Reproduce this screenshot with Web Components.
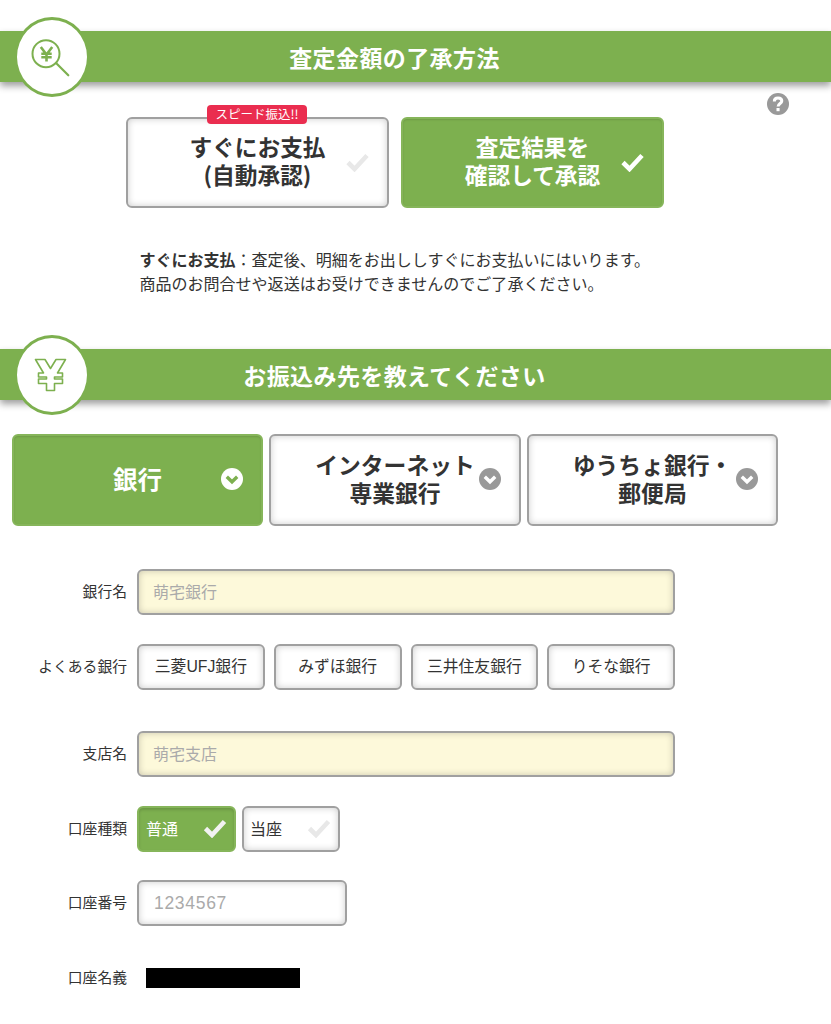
<!DOCTYPE html>
<html lang="ja">
<head>
<meta charset="utf-8">
<title>査定金額の了承方法</title>
<style>
  html, body { margin: 0; background: #fff; }
  body {
    font-family: "Noto Sans CJK JP", "Noto Sans", sans-serif;
    color: #333;
    width: 831px;
    height: 1024px;
    overflow: hidden;
  }
  main { display: block; padding-top: 17px; }
  .choices { display: flex; gap: 12px; padding-left: 126px; margin-top: 20px; position: relative; }
  .tabs { display: flex; gap: 6px; padding-left: 12px; margin-top: 19px; }
  .note { margin: 39px 0 0 139.500px; font-size: 16.030px; line-height: 24px; color: #333; white-space: nowrap; }
  .note b { font-weight: 700; }
  .form { margin-top: 43px; }
  .secret { display: block; width: 154px; height: 20px; background: #000; margin-left: 9px; }
  .help { position: absolute; left: 767px; top: -24px; }
</style>
</head>
<body>
<main>
  <section-bar title="査定金額の了承方法">
    <svg slot="icon" width="44" height="44" viewBox="0 0 44 44" fill="none" stroke="#7db04f">
      <circle cx="16" cy="18.700" r="13.500" stroke-width="2"/>
      <path d="M26 28 L38.300 40.300" stroke-width="2.200" stroke-linecap="round"/>
      <path d="M10.800 12 L16.500 19.500 L22.200 12 M16.500 19.500 V26.500 M11.300 18.800 H21.700 M11.300 22.300 H21.700" stroke-width="2.600"/>
    </svg>
  </section-bar>

  <div class="choices">
    <big-choice badge="スピード振込!!">すぐにお支払<br>(自動承認)</big-choice>
    <big-choice selected>査定結果を<br>確認して承認</big-choice>
    <svg class="help" width="22" height="22" viewBox="0 0 22 22">
      <circle cx="11" cy="11" r="11" fill="#999"/>
      <path d="M7.300 8.400 C7.300 5.900 9 4.900 11 4.900 C13.200 4.900 14.800 6.100 14.800 8 C14.800 10.500 11.100 10.500 11.100 13.500" fill="none" stroke="#fff" stroke-width="3"/>
      <rect x="9.500" y="15" width="3.100" height="3.200" fill="#fff"/>
    </svg>
  </div>

  <p class="note"><b>すぐにお支払</b>：査定後、明細をお出ししすぐにお支払いにはいります。<br>商品のお問合せや返送はお受けできませんのでご了承ください。</p>

  <section-bar title="お振込み先を教えてください" style="margin-top:40px">
    <svg slot="icon" width="33" height="34" viewBox="0 0 33 34" style="margin-left:-3px">
      <path d="M1.500 1.500 H11 L16.500 10.500 L22 1.500 H31.500 L23.500 15 H28.500 V19 H20.500 V21 H28.500 V25.500 H20.500 V32.500 H12.500 V25.500 H4.500 V21 H12.500 V19 H4.500 V15 H9.500 Z" fill="#fff" stroke="#7db04f" stroke-width="1.600" stroke-linejoin="round"/>
    </svg>
  </section-bar>

  <div class="tabs">
    <bank-tab selected>銀行</bank-tab>
    <bank-tab>インターネット<br>専業銀行</bank-tab>
    <bank-tab>ゆうちょ銀行・<br>郵便局</bank-tab>
  </div>

  <div class="form">
    <form-row label="銀行名" gap="29"><text-box value="萌宅銀行" tint width="538"></text-box></form-row>
    <form-row label="よくある銀行" gap="29">
      <pill-button>三菱UFJ銀行</pill-button>
      <pill-button>みずほ銀行</pill-button>
      <pill-button>三井住友銀行</pill-button>
      <pill-button>りそな銀行</pill-button>
    </form-row>
    <form-row label="支店名" gap="41"><text-box value="萌宅支店" tint width="538"></text-box></form-row>
    <form-row label="口座種類" gap="29">
      <radio-chip selected>普通</radio-chip>
      <radio-chip>当座</radio-chip>
    </form-row>
    <form-row label="口座番号" gap="28"><text-box value="1234567" latin width="210"></text-box></form-row>
    <form-row label="口座名義" gap="42"><span class="secret"></span></form-row>
  </div>
</main>

<template id="check">
  <svg class="check" viewBox="0 0 24 20"><path d="M2.500 10.500 L9 17 L21.500 3.500" fill="none" stroke="currentColor" stroke-width="4.600"/></svg>
</template>

<script>
  const GREEN = '#7db04f'
  const checkMarkup = document.getElementById('check').innerHTML

  class SectionBar extends HTMLElement {
    constructor() {
      super()
      this.attachShadow({ mode: 'open' }).innerHTML = `
        <style>
          :host { display: block; position: relative; height: 80px; }
          .bar {
            position: absolute; left: 0; right: 0; top: 14px; height: 51px;
            background: ${GREEN};
            box-shadow: 0 4px 7px rgba(0, 0, 0, .38);
            color: #fff; font-size: 23px; font-weight: 700; letter-spacing: .4px;
            display: flex; align-items: center; justify-content: center;
            padding-right: 42px; box-sizing: border-box;
          }
          .badge {
            position: absolute; left: 14px; top: 0; width: 76px; height: 80px;
            box-sizing: border-box; border: 3px solid ${GREEN}; border-radius: 50%;
            background: #fff; display: flex; align-items: center; justify-content: center;
          }
        </style>
        <div class="bar"><span id="t"></span></div>
        <div class="badge"><slot name="icon"></slot></div>`
    }
    connectedCallback() {
      this.shadowRoot.getElementById('t').textContent = this.getAttribute('title')
    }
  }

  class BigChoice extends HTMLElement {
    constructor() {
      super()
      this.attachShadow({ mode: 'open' }).innerHTML = `
        <style>
          :host {
            display: flex; position: relative; width: 263px; height: 91px; box-sizing: border-box;
            border: 2px solid #a0a0a0; border-radius: 6px; background: #fff;
            box-shadow: inset 0 0 7px rgba(0, 0, 0, .2);
            align-items: center; justify-content: center;
            font-size: 22.700px; line-height: 28px; font-weight: 700; color: #333; text-align: center;
          }
          :host([selected]) { background: ${GREEN}; border-color: #86b55a; color: #fff; box-shadow: inset 0 1px 2px rgba(0, 0, 0, .12); }
          .label { margin-top: -3px; }
          .check { position: absolute; right: 17px; top: 33px; width: 25px; height: 20px; color: #e8e8e8; }
          :host([selected]) .check { color: #fff; }
          .tag {
            position: absolute; left: 79px; top: -14px; height: 19px; width: 100px;
            background: #ea2d4f; color: #fff; border-radius: 4px;
            font-size: 12.500px; line-height: 18px; font-weight: 400; white-space: nowrap;
          }
        </style>
        <div class="label"><slot></slot></div>
        ${checkMarkup}
        <div class="tag" hidden></div>`
    }
    connectedCallback() {
      const tag = this.shadowRoot.querySelector('.tag')
      if (this.hasAttribute('badge')) {
        tag.textContent = this.getAttribute('badge')
        tag.hidden = false
      } else {
        tag.remove()
      }
    }
  }

  class BankTab extends HTMLElement {
    constructor() {
      super()
      this.attachShadow({ mode: 'open' }).innerHTML = `
        <style>
          :host {
            display: flex; position: relative; width: 252px; height: 92px; box-sizing: border-box;
            border: 2px solid #a0a0a0; border-radius: 6px; background: #fff;
            box-shadow: inset 0 0 7px rgba(0, 0, 0, .2);
            align-items: center; justify-content: center;
            font-size: 22.800px; line-height: 28px; font-weight: 700; color: #333; text-align: center;
          }
          :host(:last-child) { width: 251px; }
          :host([selected]) { width: 251px; font-size: 24.500px; background: ${GREEN}; border-color: #86b55a; color: #fff; box-shadow: inset 0 1px 2px rgba(0, 0, 0, .12); }
          .label { margin-top: -3px; }
          svg { position: absolute; right: 18px; top: 32px; width: 22px; height: 22px; }
          circle { fill: #999; }
          path { stroke: #fff; }
          :host([selected]) circle { fill: #fff; }
          :host([selected]) path { stroke: ${GREEN}; }
        </style>
        <div class="label"><slot></slot></div>
        <svg viewBox="0 0 22 22"><circle cx="11" cy="11" r="11"/><path d="M5.800 8.800 L11 13.800 L16.200 8.800" fill="none" stroke-width="3.400"/></svg>`
    }
  }

  class FormRow extends HTMLElement {
    constructor() {
      super()
      this.attachShadow({ mode: 'open' }).innerHTML = `
        <style>
          :host { display: flex; align-items: center; font-size: 14.800px; color: #333; }
          .label { width: 127px; text-align: right; white-space: nowrap; flex: none; margin-top: -3px; }
          .body { display: flex; gap: 9px; margin-left: 10px; }
        </style>
        <div class="label"></div>
        <div class="body"><slot></slot></div>`
    }
    connectedCallback() {
      this.shadowRoot.querySelector('.label').textContent = this.getAttribute('label')
      this.style.marginTop = this.getAttribute('gap') + 'px'
      if (this.querySelector('radio-chip')) this.shadowRoot.querySelector('.body').style.gap = '6px'
    }
  }

  class TextBox extends HTMLElement {
    constructor() {
      super()
      this.attachShadow({ mode: 'open' }).innerHTML = `
        <style>
          :host {
            display: flex; align-items: center; height: 46px; box-sizing: border-box;
            border: 2px solid #a0a0a0; border-radius: 6px; background: #fff;
            box-shadow: inset 0 0 7px rgba(0, 0, 0, .2);
            padding: 0 0 2px 14px; font-size: 16px; color: #aaa;
          }
          :host([tint]) { background: #fdf9da; }
          :host([latin]) { font-family: "Liberation Sans", sans-serif; font-size: 17.500px; letter-spacing: .7px; padding-left: 15px; padding-bottom: 0; }
        </style>
        <span></span>`
    }
    connectedCallback() {
      this.shadowRoot.querySelector('span').textContent = this.getAttribute('value')
      this.style.width = this.getAttribute('width') + 'px'
    }
  }

  class PillButton extends HTMLElement {
    constructor() {
      super()
      this.attachShadow({ mode: 'open' }).innerHTML = `
        <style>
          :host {
            display: flex; align-items: center; justify-content: center;
            width: 127.750px; height: 46px; box-sizing: border-box; padding-bottom: 3px;
            border: 2px solid #a0a0a0; border-radius: 6px; background: #fff;
            box-shadow: inset 0 0 7px rgba(0, 0, 0, .2);
            font-family: "Liberation Sans", "Noto Sans CJK JP", sans-serif;
            font-size: 15.800px; color: #333; white-space: nowrap;
          }
        </style>
        <slot></slot>`
    }
  }

  class RadioChip extends HTMLElement {
    constructor() {
      super()
      this.attachShadow({ mode: 'open' }).innerHTML = `
        <style>
          :host {
            display: flex; align-items: center; position: relative;
            width: 98px; height: 46px; box-sizing: border-box; padding: 0 0 3px 6px;
            border: 2px solid #a0a0a0; border-radius: 6px; background: #fff;
            box-shadow: inset 0 0 7px rgba(0, 0, 0, .2);
            font-size: 16px; color: #333;
          }
          :host([selected]) { width: 99px; padding-left: 7px; background: ${GREEN}; border-color: #86b55a; color: #fff; box-shadow: inset 0 2px 3px rgba(0, 0, 0, .14); }
          .check { position: absolute; right: 7px; top: 10px; width: 24px; height: 20px; color: #e8e8e8; }
          :host([selected]) .check { color: #f2f2f2; }
        </style>
        <slot></slot>
        ${checkMarkup}`
    }
  }

  customElements.define('section-bar', SectionBar)
  customElements.define('big-choice', BigChoice)
  customElements.define('bank-tab', BankTab)
  customElements.define('form-row', FormRow)
  customElements.define('text-box', TextBox)
  customElements.define('pill-button', PillButton)
  customElements.define('radio-chip', RadioChip)
</script>
</body>
</html>
